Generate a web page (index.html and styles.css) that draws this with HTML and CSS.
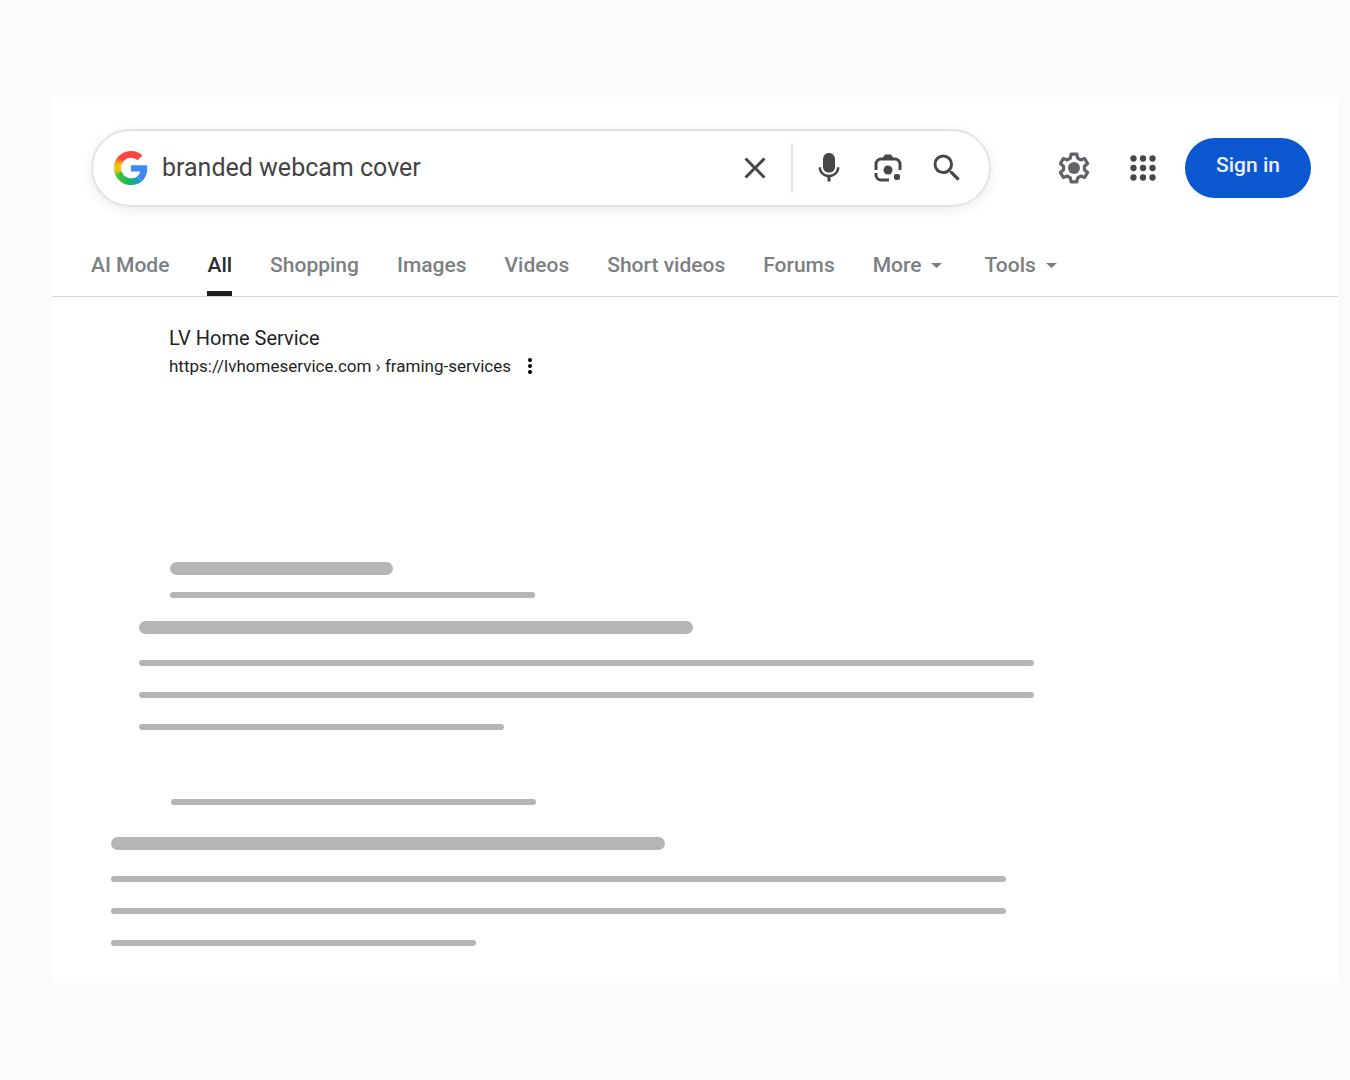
FILE: index.html
```html
<!DOCTYPE html>
<html lang="en">
<head>
<meta charset="utf-8">
<meta name="viewport" content="width=device-width, initial-scale=1">
<title>branded webcam cover</title>
<link rel="stylesheet" href="styles.css">
</head>
<body>
<div class="page">
  <header class="header">
    <form class="search" role="search">
      <svg class="logo" viewBox="0 0 48 48" aria-hidden="true">
        <defs>
          <linearGradient id="g-left" x1="0" y1="0" x2="0" y2="1">
            <stop offset="0" stop-color="#fc4b3c"/>
            <stop offset=".35" stop-color="#fcbd0a"/>
            <stop offset=".6" stop-color="#e3cc10"/>
            <stop offset="1" stop-color="#1eb45c"/>
          </linearGradient>
          <linearGradient id="g-bottom" x1="0" y1="0" x2="1" y2="0">
            <stop offset="0" stop-color="#5cc02c"/>
            <stop offset=".5" stop-color="#0ebc5f"/>
            <stop offset="1" stop-color="#3186ff"/>
          </linearGradient>
        </defs>
        <path fill="#fd4640" d="M24 9.500c3.540 0 6.710 1.220 9.210 3.600l6.850-6.850C35.900 2.380 30.470 0 24 0 14.620 0 6.510 5.380 2.560 13.220l7.980 6.190C12.430 13.720 17.740 9.500 24 9.500z"/>
        <path fill="url(#g-left)" d="M10.600 28.800A14.500 14.500 0 0 1 10.600 19.300L13 15 5 9.500A24 24 0 0 0 2.600 34.800L7 38 13 32z"/>
        <path fill="url(#g-bottom)" d="M24 48c6.480 0 11.930-2.130 15.890-5.810l-7.730-6c-2.150 1.450-4.920 2.300-8.160 2.300-6.260 0-11.570-4.220-13.470-9.910l-7.980 6.190C6.510 42.620 14.620 48 24 48z"/>
        <path fill="#3d89f8" d="M46.980 24.550c0-1.570-.150-3.090-.380-4.550H24v9.020h12.940c-.580 2.960-2.260 5.480-4.780 7.180l7.730 6c4.510-4.180 7.090-10.360 7.090-17.650z"/>
      </svg>
      <input class="query" type="text" value="branded webcam cover" aria-label="Search">
      <button class="icon-button" type="reset" aria-label="Clear">
        <svg class="icon" viewBox="0 0 24 24"><path d="M19 6.410 17.590 5 12 10.590 6.410 5 5 6.410 10.590 12 5 17.590 6.410 19 12 13.410 17.590 19 19 17.590 13.410 12z"/></svg>
      </button>
      <span class="divider"></span>
      <div class="search-tools">
        <button class="icon-button" type="button" aria-label="Search by voice">
          <svg class="icon" viewBox="0 0 24 24"><path d="M12 15c2.200 0 4-1.500 4-3.700V6c0-2.200-1.800-4-4-4S8 3.800 8 6v5.300C8 13.500 9.800 15 12 15z"/><path d="M17.300 11.500c0 3-2.400 5-5.300 5s-5.300-2-5.300-5H5c0 3.400 2.700 6.100 6 6.700V21h2v-2.800c3.300-.600 6-3.300 6-6.700z"/></svg>
        </button>
        <button class="icon-button" type="button" aria-label="Search by image">
          <svg class="icon" viewBox="0 0 36 36"><path class="stroke" d="M6 20v-6a5 5 0 0 1 5-5h14a5 5 0 0 1 5 5v6M6 23v2a5 5 0 0 0 5 5h8"/><path d="M12 9l3-4.500h6L24 9z"/><circle cx="18" cy="20" r="4.500"/><rect x="24" y="24" width="6" height="6" rx="2"/></svg>
        </button>
        <button class="icon-button" type="submit" aria-label="Search">
          <svg class="icon" viewBox="0 0 24 24"><path d="M15.500 14h-.790l-.280-.270A6.470 6.470 0 0 0 16 9.500 6.500 6.500 0 1 0 9.500 16c1.610 0 3.090-.590 4.230-1.570l.270.280v.790l5 4.990L20.490 19l-4.990-5zm-6 0C7.010 14 5 11.990 5 9.500S7.010 5 9.500 5 14 7.010 14 9.500 11.990 14 9.500 14z"/></svg>
        </button>
      </div>
    </form>
    <div class="account">
      <button class="icon-button settings-button" type="button" aria-label="Settings">
        <svg class="icon settings" viewBox="0 0 24 24"><path class="gear" d="M10.200 3.200h3.600l.500 2.600 1.900 1.100 2.500-.900 1.900 3.200-2 1.700v2.200l2 1.700-1.900 3.200-2.500-.900-1.900 1.100-.500 2.600h-3.600l-.500-2.600-1.900-1.100-2.500.900-1.900-3.200 2-1.700v-2.200l-2-1.700 1.900-3.200 2.500.900 1.900-1.100z"/><circle cx="12" cy="12" r="3.800"/></svg>
      </button>
      <button class="icon-button" type="button" aria-label="Apps">
        <svg class="icon apps" viewBox="0 0 24 24"><path d="M6 8a2 2 0 1 0 0-4 2 2 0 0 0 0 4zm6 12a2 2 0 1 0 0-4 2 2 0 0 0 0 4zm-6 0a2 2 0 1 0 0-4 2 2 0 0 0 0 4zm0-6a2 2 0 1 0 0-4 2 2 0 0 0 0 4zm6 0a2 2 0 1 0 0-4 2 2 0 0 0 0 4zm6-6a2 2 0 1 0 0-4 2 2 0 0 0 0 4zm-6 0a2 2 0 1 0 0-4 2 2 0 0 0 0 4zm6 6a2 2 0 1 0 0-4 2 2 0 0 0 0 4zm0 6a2 2 0 1 0 0-4 2 2 0 0 0 0 4z"/></svg>
      </button>
      <button class="sign-in" type="button">Sign in</button>
    </div>
  </header>

  <nav class="tabs" aria-label="Search filters">
    <a class="tab" href="#">AI Mode</a>
    <a class="tab active" href="#" aria-current="page">All</a>
    <a class="tab" href="#">Shopping</a>
    <a class="tab" href="#">Images</a>
    <a class="tab" href="#">Videos</a>
    <a class="tab" href="#">Short videos</a>
    <a class="tab" href="#">Forums</a>
    <button class="tab menu" type="button">More <svg class="caret" viewBox="0 0 20 10"><path d="M5 3h11l-5.500 5z"/></svg></button>
    <button class="tab menu" type="button">Tools <svg class="caret" viewBox="0 0 20 10"><path d="M5 3h11l-5.500 5z"/></svg></button>
  </nav>

  <main class="results">
    <article class="result">
      <a class="site" href="#">LV Home Service</a>
      <div class="address">
        <cite class="url">https://lvhomeservice.com › framing-services</cite>
        <button class="more" type="button" aria-label="About this result"><svg class="dots" viewBox="0 0 6 18"><circle cx="3" cy="3" r="2"/><circle cx="3" cy="9" r="2"/><circle cx="3" cy="15" r="2"/></svg></button>
      </div>
    </article>

    <div class="skeleton first" aria-hidden="true">
      <div class="skeleton-head">
        <span class="bar thick name"></span>
        <span class="bar short"></span>
      </div>
      <div class="skeleton-body">
        <span class="bar thick title"></span>
        <span class="bar"></span>
        <span class="bar"></span>
        <span class="bar short"></span>
      </div>
    </div>

    <div class="skeleton second" aria-hidden="true">
      <div class="skeleton-head">
        <span class="bar short"></span>
      </div>
      <div class="skeleton-body">
        <span class="bar thick title"></span>
        <span class="bar"></span>
        <span class="bar"></span>
        <span class="bar short"></span>
      </div>
    </div>
  </main>
</div>
</body>
</html>
```

FILE: styles.css
```css
* {
  box-sizing: border-box;
}

body {
  margin: 0;
  padding: 97px 12px 97px 52px;
  background: #fafcf9;
  color: #1f1f1f;
  font-family: Roboto, "Liberation Sans", sans-serif;
}

button {
  padding: 0;
  border: 0;
  background: none;
  font: inherit;
  cursor: pointer;
}

a {
  color: inherit;
  text-decoration: none;
}

.page {
  background: #fff;
}

/* Header */
.header {
  display: flex;
  align-items: center;
  gap: 64px;
  padding: 32px 27px 0 39px;
}

.search {
  display: flex;
  flex: 1;
  align-items: center;
  height: 78px;
  padding: 0 24px 0 21px;
  border: 2px solid #e2e3e3;
  border-radius: 39px;
  box-shadow: 0 3px 12px rgba(60, 64, 67, 0.1);
}

.logo {
  width: 34px;
  height: 34px;
}

.query {
  flex: 1;
  min-width: 0;
  padding: 0;
  margin-left: 14px;
  border: 0;
  outline: 0;
  background: none;
  color: #444;
  font: 400 25px/36px Roboto, "Liberation Sans", sans-serif;
}

.icon-button {
  display: flex;
}

.icon {
  width: 36px;
  height: 36px;
  fill: #474747;
}

.stroke {
  fill: none;
  stroke: #474747;
  stroke-width: 3;
}

.divider {
  width: 2px;
  height: 50px;
  margin: 0 18px;
  background: #e4e6e8;
}

.search-tools {
  display: flex;
  gap: 23px;
}

.account {
  display: flex;
  align-items: center;
  gap: 23px;
}

.settings-button {
  margin-right: 8px;
}

.settings {
  width: 38px;
  height: 38px;
  fill: #5f6368;
}

.gear {
  fill: none;
  stroke: #5f6368;
  stroke-width: 2;
  stroke-linejoin: round;
}

.apps {
  width: 38px;
  height: 38px;
}

.sign-in {
  width: 126px;
  height: 60px;
  padding-bottom: 6px;
  border-radius: 30px;
  background: #0b57d0;
  color: #e9f0fc;
  font-size: 21px;
  font-weight: 500;
}

/* Filter tabs */
.tabs {
  display: flex;
  gap: 38px;
  margin-top: 30px;
  padding-left: 39px;
  border-bottom: 1px solid #d8d9da;
}

.tab {
  display: flex;
  align-items: center;
  height: 59px;
  padding-top: 2px;
  border-bottom: 5px solid transparent;
  color: #7d8082;
  font-size: 21px;
  font-weight: 500;
  line-height: 28px;
  white-space: nowrap;
}

.tab.active {
  border-bottom-color: #1f1f1f;
  color: #2a2a2a;
}

.menu {
  gap: 5px;
}

.caret {
  width: 20px;
  height: 10px;
  fill: #7a7d7f;
}

/* Results */
.results {
  padding: 27px 59px 37px;
}

.result {
  padding-left: 58px;
}

.site {
  display: block;
  font-size: 20px;
  line-height: 28px;
}

.address {
  display: flex;
  align-items: center;
  gap: 16px;
}

.url {
  font-size: 17px;
  font-style: normal;
  line-height: 28px;
}

.more {
  display: flex;
}

.dots {
  width: 6px;
  height: 18px;
}

/* Placeholder results */
.skeleton {
  max-width: 895px;
}

.skeleton.first {
  margin: 182px 0 0 28px;
}

.skeleton.second {
  margin-top: 69px;
}

.skeleton-head {
  display: flex;
  flex-direction: column;
  gap: 17px;
  padding-left: 31px;
}

.second .skeleton-head {
  padding-left: 60px;
}

.skeleton-body {
  display: flex;
  flex-direction: column;
  gap: 26px;
  margin-top: 23px;
}

.second .skeleton-body {
  margin-top: 32px;
}

.bar {
  height: 6px;
  border-radius: 3px;
  background: #b5b5b5;
}

.bar.thick {
  height: 13px;
  border-radius: 7px;
}

.bar.short {
  max-width: 365px;
}

.bar.name {
  max-width: 223px;
}

.bar.title {
  max-width: 554px;
}
```
